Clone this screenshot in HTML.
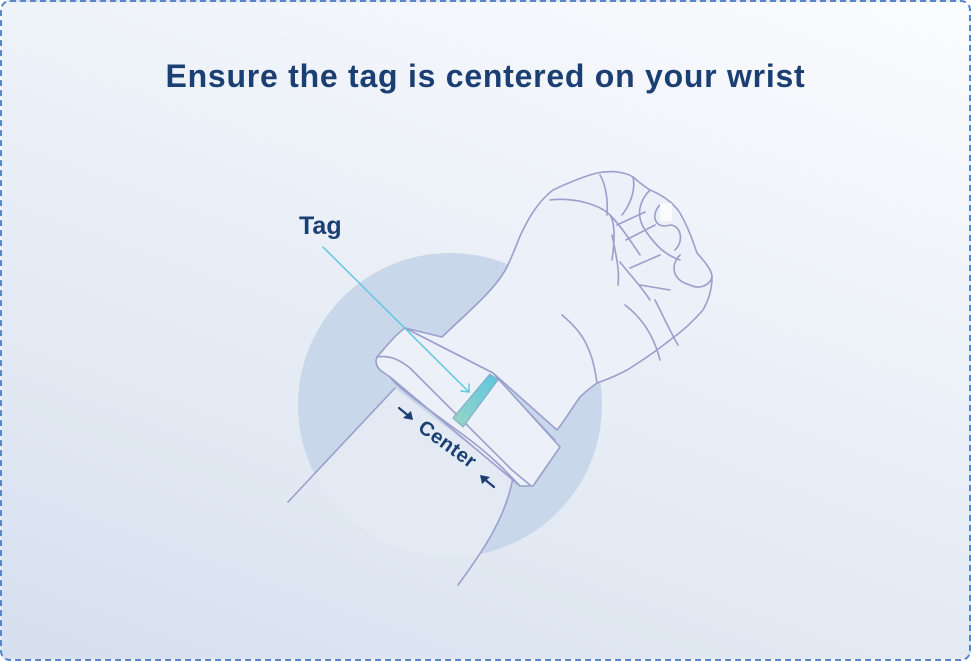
<!DOCTYPE html>
<html><head><meta charset="utf-8"><style>
html,body{margin:0;padding:0;}
body{width:971px;height:661px;overflow:hidden;background:#fff;}
.card{position:absolute;left:0;top:0;width:967px;height:657px;border:2px dashed #5a86c8;border-radius:10px;
background:linear-gradient(200deg,#fbfcfe 0%,#eef2f9 35%,#e2e9f3 70%,#d5dfee 100%);overflow:hidden;}
h1{position:absolute;left:0;right:0;top:56px;margin:0;text-align:center;font:bold 32px "Liberation Sans",sans-serif;color:#1b3f73;letter-spacing:0.75px;white-space:nowrap;}
svg{position:absolute;left:0;top:0;}
</style></head><body>
<div class="card">
<h1>Ensure the tag is centered on your wrist</h1>
</div>
<svg width="971" height="661" viewBox="0 0 971 661" fill="none" stroke="#9a9fcb" stroke-width="1.6" stroke-linejoin="round" stroke-linecap="round">
<defs>
<linearGradient id="tg" x1="0" y1="1" x2="1" y2="0"><stop offset="0" stop-color="#9bd5c3"/><stop offset="1" stop-color="#5cc6e0"/></linearGradient>
<clipPath id="cc"><circle cx="450" cy="405" r="152"/></clipPath>
</defs>
<circle cx="450" cy="405" r="152" fill="#c9d7ea" stroke="none"/>
<!-- lower arm -->
<path clip-path="url(#cc)" d="M395 388 L288 502 L300 661 L458 661 L458 585 C480 555 505 520 513 478 Z" fill="#e4eaf4" stroke="none"/>
<path d="M395 388 L288 502 M513 478 C505 520 480 555 458 585" />
<!-- hand -->
<path d="M442 337 C470 310 495 290 507 267 C515 250 518 240 522 232 C530 215 540 200 553 190 C570 182 585 176 597 173 C612 170 625 172 633 177 C640 183 645 187 650 190 C665 196 675 205 680 213 C690 230 694 245 697 253 C705 262 712 270 712 277 C712 292 707 303 703 310 C690 325 680 333 670 340 C655 352 640 362 627 370 C612 378 605 380 597 383 C590 388 585 392 580 397 C572 408 565 420 557 430 L493 373 L405 328 Z" fill="#ebf0f9"/>
<path d="M550 200 C575 197 600 205 610 215 C615 222 615 240 612 260" />
<path d="M600 175 C606 185 608 200 607 215" />
<path d="M633 177 C636 190 630 205 622 215" />
<path d="M610 215 C620 225 630 240 640 255 M617 225 L645 212 M626 240 L655 225 M612 235 C615 250 620 270 618 285 M620 262 C630 275 640 285 650 300 M630 268 L660 255 M650 190 C640 200 635 215 645 230 C655 245 665 255 680 260 M660 205 C650 215 655 230 670 225 C680 225 685 240 675 250 M680 255 C670 265 672 280 690 285 C700 290 710 285 712 277 M640 285 L670 290 M655 300 C665 320 672 335 678 345 M625 305 C645 320 655 340 660 360 M562 315 C580 330 592 345 597 383"/>
<rect x="660" y="203" width="12" height="18" rx="2" fill="#fbfcfe" stroke="none"/>
<!-- band -->
<path d="M380 370 L390 377 L513 480 L520 486 L533 486 L560 447 L493 373 L405 328 C395 335 385 348 377 357 C375 362 376 366 380 370 Z" fill="#ebf0f9"/>
<path d="M377 357 C390 355 400 360 410 368 L512 470 L530 485 M390 377 C400 390 430 410 470 440 C490 455 505 470 520 486"/>
<path d="M497 378 L555 440" stroke-width="1"/>
<path d="M453 418 L490 374 L498 380 L463 427 Z" fill="url(#tg)" stroke="#7fa8c8" stroke-width="1"/>
<!-- tag pointer -->
<path d="M323 247 L469 392 M469 392 L461 391 M469 392 L469 384" stroke="#62c7df" stroke-width="1.5"/>
</svg>
<div style="position:absolute;left:299px;top:212px;font:bold 25px 'Liberation Sans',sans-serif;color:#1b3f73;">Tag</div>
<div style="position:absolute;left:447px;top:445px;transform:translate(-50%,-50%) rotate(36deg);font:bold 20px 'Liberation Sans',sans-serif;color:#1b3f73;letter-spacing:0.5px;">Center</div>
<svg width="971" height="661" style="position:absolute;left:0;top:0" fill="#1b3f73" stroke="#1b3f73" stroke-width="2.2" stroke-linecap="round">
<path d="M399 408 L410 417"/><path d="M413 420 L403 418 L411 411 Z" stroke="none"/>
<path d="M494 487 L483 478"/><path d="M480 475 L490 477 L482 484 Z" stroke="none"/>
</svg>
</body></html>
